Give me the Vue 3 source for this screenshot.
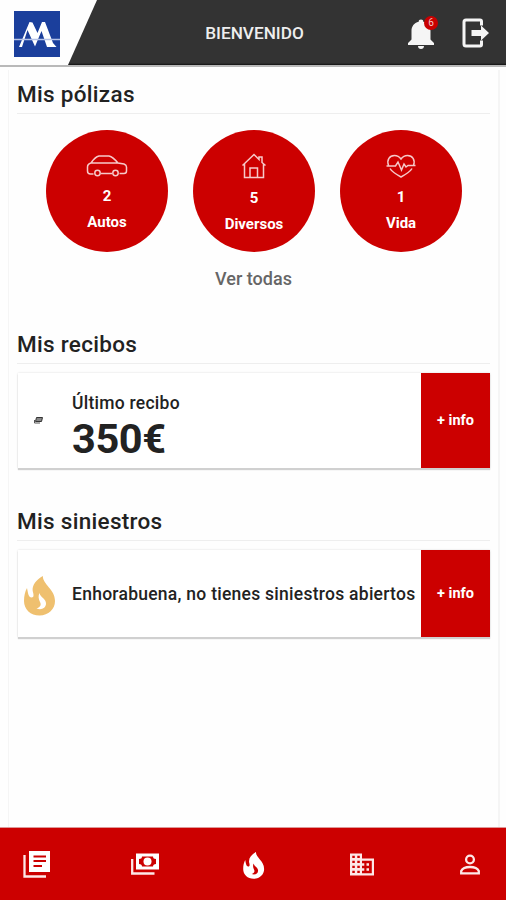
<script setup>
import { ref } from 'vue'

const policies = ref([
  { id: 'autos', count: 2, label: 'Autos' },
  { id: 'diversos', count: 5, label: 'Diversos' },
  { id: 'vida', count: 1, label: 'Vida' },
])
const notifications = ref(6)
</script>

<template>
  <div class="screen">
    <header class="header">
      <div class="brand">
        <svg class="logo" viewBox="0 0 46 46">
          <rect width="46" height="46" fill="#1b3f9c" />
          <path d="M5 36L15.500 11L18.500 11.500L23.500 22L28 11H31L39 32L42.500 36H33L27.500 20L21 35.500L13.500 19L8 36Z" fill="#fff" />
          <path d="M0 28.500H46" stroke="#b5c2e8" stroke-width="1.500" />
        </svg>
      </div>
      <h1 class="title">BIENVENIDO</h1>
      <div class="actions">
        <button class="bell">
          <svg width="28" height="32" viewBox="0 0 28 32" fill="#f5f5f5">
            <path d="M14 1.500c1.500 0 2.300.8 2.300 2.300C21 5 23.500 8.500 23.500 13v8.500l3.500 3.500v2H1v-2l3.500-3.500V13C4.500 8.500 7 5 11.700 3.800c0-1.500.8-2.300 2.300-2.300zM11 28h6c0 2-1.200 3-3 3s-3-1-3-3z" />
          </svg>
          <span class="badge">{{ notifications }}</span>
        </button>
        <button class="logout">
          <svg width="28" height="30" viewBox="0 0 28 30">
            <path d="M19.500 7.500V3.500Q19.500 2 18 2H4Q2 2 2 4V26Q2 28 4 28H18Q19.500 28 19.500 26.500V22.500" fill="none" stroke="#f5f5f5" stroke-width="3" />
            <path d="M9.500 12H19V7.500L27 15L19 22.500V18H9.500Z" fill="#f5f5f5" />
          </svg>
        </button>
      </div>
    </header>

    <main class="content">
      <section class="policies">
        <h2>Mis pólizas</h2>
        <div class="circles">
          <div v-for="p in policies" :key="p.id" class="circle" :class="p.id">
            <svg v-if="p.id === 'autos'" width="42" height="24" viewBox="0 0 42 24">
              <path d="M7.500 21H4.500Q1.500 21 1.500 18V14Q1.500 11 5 10Q9 4 13 3H23Q27 4 32 10L38 11Q40.500 12 40.500 14V18Q40.500 20.500 38 20.500H33.500M15 20.500H26M5 10H32" />
              <circle cx="11.500" cy="20" r="2.700" />
              <circle cx="29.500" cy="20" r="2.700" />
            </svg>
            <svg v-else-if="p.id === 'diversos'" width="26" height="26" viewBox="0 0 26 26">
              <path d="M1.500 12.500L13 1.500L18 6.500V4H21V9.500L24.500 12.500M3.500 11V24.500H22.500V11M9 24V15H16.500V24" />
            </svg>
            <svg v-else width="30" height="25" viewBox="0 0 30 25">
              <path d="M2.500 12.500C.5 7 3.500 2.500 8.500 2.500Q12.500 2.500 15 6Q17.500 2.500 21.500 2.500C26.500 2.500 29.500 7 27.500 12.500M4 15.500Q6 19 15 24Q24 19 26 15.500M.5 13H9.500L12 9L15.500 17L18 11L20 14L22 12.500H29.500" />
            </svg>
            <strong class="count">{{ p.count }}</strong>
            <strong class="label">{{ p.label }}</strong>
          </div>
        </div>
        <a class="all">Ver todas</a>
      </section>

      <section class="receipts">
        <h2>Mis recibos</h2>
        <div class="card">
          <div class="icon">
            <svg width="9" height="7" viewBox="0 0 9 7">
              <path d="M2.500 .5H8.500L7.500 4.500H1.500Z" fill="#888" stroke="#333" />
              <path d="M.5 3V6H6" fill="none" stroke="#555" />
            </svg>
          </div>
          <div class="text">
            <p>Último recibo</p>
            <p class="amount">350€</p>
          </div>
          <button class="info">+ info</button>
        </div>
      </section>

      <section class="claims">
        <h2>Mis siniestros</h2>
        <div class="card">
          <div class="icon">
            <svg width="32" height="40" viewBox="0 0 32 40">
              <path d="M18.800 0C19 9 31 13 31 25C31 33 24.500 39.500 15.500 39.500C6.500 39.500 0 33.500 0 25C0 20 1 15.500 3 12C4 17 4.500 21.500 7.500 21.500C10.500 21.500 9.500 18 8.700 15C8 9 12 4 18.800 0Z" fill="#efc06f" />
              <path d="M15.500 17C16.500 22 22.500 22.500 22 28C21.700 32 17.500 34.500 12.500 32.500C16.500 31 17.500 29 16 26C14.500 23 14 20 15.500 17Z" fill="#fff" />
            </svg>
          </div>
          <div class="text">
            <p>Enhorabuena, no tienes siniestros abiertos</p>
          </div>
          <button class="info">+ info</button>
        </div>
      </section>
    </main>

    <nav class="tabs">
      <a>
        <svg width="28" height="28" viewBox="0 0 28 28">
          <path d="M1.500 5V26.500H23" fill="none" stroke="#fde8e8" stroke-width="2.300" />
          <path d="M6 1H27V22H6Z" fill="#fff" />
          <path d="M10.500 6.500H23M10.500 11H23M10.500 16H19" stroke="#c00" stroke-width="2" />
        </svg>
      </a>
      <a>
        <svg width="28" height="22" viewBox="0 0 28 22">
          <path d="M1.200 6V20.500H23.500" fill="none" stroke="#fde8e8" stroke-width="2.300" />
          <path d="M5 .5H28V16.500H5Z" fill="#fff" />
          <path d="M11 3.500H22Q22 6 25 6V11Q22 11 22 13.500H11Q11 11 8 11V6Q11 6 11 3.500Z" fill="#c00" />
          <circle cx="16.500" cy="8.500" r="4" fill="#fff" />
        </svg>
      </a>
      <a>
        <svg class="flame" width="22" height="27" viewBox="0 0 32 40">
          <path d="M18.800 0C19 9 31 13 31 25C31 33 24.500 39.500 15.500 39.500C6.500 39.500 0 33.500 0 25C0 20 1 15.500 3 12C4 17 4.500 21.500 7.500 21.500C10.500 21.500 9.500 18 8.700 15C8 9 12 4 18.800 0Z" fill="#fff" />
          <path d="M15.500 17C16.500 22 22.500 22.500 22 28C21.700 32 17.500 34.500 12.500 32.500C16.500 31 17.500 29 16 26C14.500 23 14 20 15.500 17Z" fill="#c00" />
        </svg>
      </a>
      <a>
        <svg width="24" height="23" viewBox="0 0 24 23">
          <path d="M0 .5H12V5.500H24V22.500H0Z" fill="#fde8e8" />
          <path d="M2.300 2.800h2.500v2.300H2.300zM7.300 2.800h2.500v2.300H7.300zM2.300 7.800h2.500v2.300H2.300zM7.300 7.800h2.500v2.300H7.300zM2.300 12.800h2.500v2.300H2.300zM7.300 12.800h2.500v2.300H7.300zM2.300 17.800h2.500v2.300H2.300zM7.300 17.800h2.500v2.300H7.300zM12 7.800H21.800V20.300H12V17.800H14.300V15.300H12V12.800H14.300V10.300H12z" fill="#c00" />
          <path d="M16.500 10.300h2.500v2.500h-2.500zM16.500 15.300h2.500v2.500h-2.500z" fill="#fde8e8" />
        </svg>
      </a>
      <a>
        <svg width="20" height="21" viewBox="0 0 20 21" fill="none" stroke="#fde8e8" stroke-width="2.300">
          <circle cx="10" cy="5.500" r="3.900" />
          <path d="M1.200 19.300V17Q3 13 10 13Q17 13 18.800 17V19.300Z" />
        </svg>
      </a>
    </nav>
  </div>
</template>

<style>
  body {
    margin: 0;
    background: #fefefe;
  }
</style>

<style scoped>
  .screen {
    height: 900px;
    display: flex;
    flex-direction: column;
    box-sizing: border-box;
    font-family: Roboto, "Liberation Sans", sans-serif;
    color: #222;
    background: #fefefe;
  }

  h1, h2, p {
    margin: 0;
    font-weight: 500;
  }

  button {
    border: 0;
    padding: 0;
    background: none;
    font-family: inherit;
  }

  svg {
    display: block;
  }

  .header {
    flex: none;
    height: 67px;
    box-sizing: border-box;
    border-bottom: 2px solid #b9b9b9;
    display: grid;
    grid-template-columns: 97px 1fr 97px;
    background: linear-gradient(#333 63px, #111 65px);
  }

  .brand {
    background: #fefefe;
    clip-path: polygon(0 0, 100% 0, 68px 100%, 0 100%);
    padding: 11px 0 0 14px;
  }

  .logo {
    width: 46px;
    height: 46px;
  }

  .title {
    align-self: center;
    text-align: center;
    color: #eee;
    font-size: 17.200px;
    padding: 1px 0 0 3px;
  }

  .actions {
    display: flex;
    align-items: flex-start;
    gap: 27px;
    padding-top: 18px;
    margin-left: -2px;
  }

  .bell {
    position: relative;
  }

  .badge {
    position: absolute;
    top: -2px;
    right: -3px;
    width: 14px;
    height: 14px;
    border-radius: 50%;
    background: #c90000;
    color: #f5c5c5;
    font-size: 10px;
    line-height: 14px;
    text-align: center;
  }

  .content {
    flex: 1;
    margin: 3px 6px 0 8px;
    padding: 0 8px;
    border: solid #f5f5f5;
    border-width: 0 2px 0 1px;
  }

  h2 {
    font-size: 22.500px;
    line-height: 26px;
    padding: 11px 0 6px;
    letter-spacing: .3px;
    border-bottom: 1px solid #eee;
  }

  .circles {
    display: flex;
    justify-content: space-between;
    padding: 16px 28px 0 29px;
  }

  .circle {
    width: 122px;
    height: 122px;
    box-sizing: border-box;
    border-radius: 50%;
    background: #c00;
    color: #fff;
    display: flex;
    flex-direction: column;
    align-items: center;
    padding-top: 23px;
    font-size: 15px;
    line-height: 18px;
  }

  .circle svg {
    fill: none;
    stroke: #f6c9c9;
    stroke-width: 1.500;
  }

  .count {
    margin-top: 10px;
  }

  .label {
    margin-top: 8px;
  }

  .all {
    display: block;
    margin-top: 15px;
    text-align: center;
    color: #666;
    font-size: 18px;
    font-weight: 500;
    line-height: 24px;
  }

  .receipts {
    margin-top: 29px;
  }

  .claims {
    margin-top: 29px;
  }

  .card {
    display: flex;
    height: 95px;
    margin: 9px 0 0 1px;
    background: #fff;
    box-shadow: 0 2px 1px #d0d0d0, 0 0 2px #ddd;
  }

  .claims .card {
    height: 87px;
  }

  .icon {
    width: 54px;
    display: flex;
    align-items: center;
    padding: 4px 0 0 6px;
    box-sizing: border-box;
  }

  .receipts .icon {
    padding: 0 0 0 16px;
  }

  .text {
    flex: 1;
    min-width: 0;
    display: flex;
    flex-direction: column;
    justify-content: center;
    font-size: 17.500px;
    line-height: 22px;
    letter-spacing: .26px;
    white-space: nowrap;
  }

  .receipts .text {
    padding-top: 14px;
  }

  .text .amount {
    font-size: 41.500px;
    line-height: 49px;
    letter-spacing: -.4px;
    font-weight: 700;
  }

  .info {
    flex: none;
    width: 69px;
    background: #c00;
    color: #fff;
    font-size: 14.500px;
    font-weight: 700;
  }

  .tabs {
    flex: none;
    height: 73px;
    box-sizing: border-box;
    border-top: 1px solid #d99;
    background: #c00;
    display: flex;
    justify-content: space-between;
    align-items: center;
    padding: 0 22px 0 23px;
  }

  .tabs a {
    width: 28px;
    display: flex;
    justify-content: center;
  }

  .flame {
    margin-top: 3px;
  }
</style>
